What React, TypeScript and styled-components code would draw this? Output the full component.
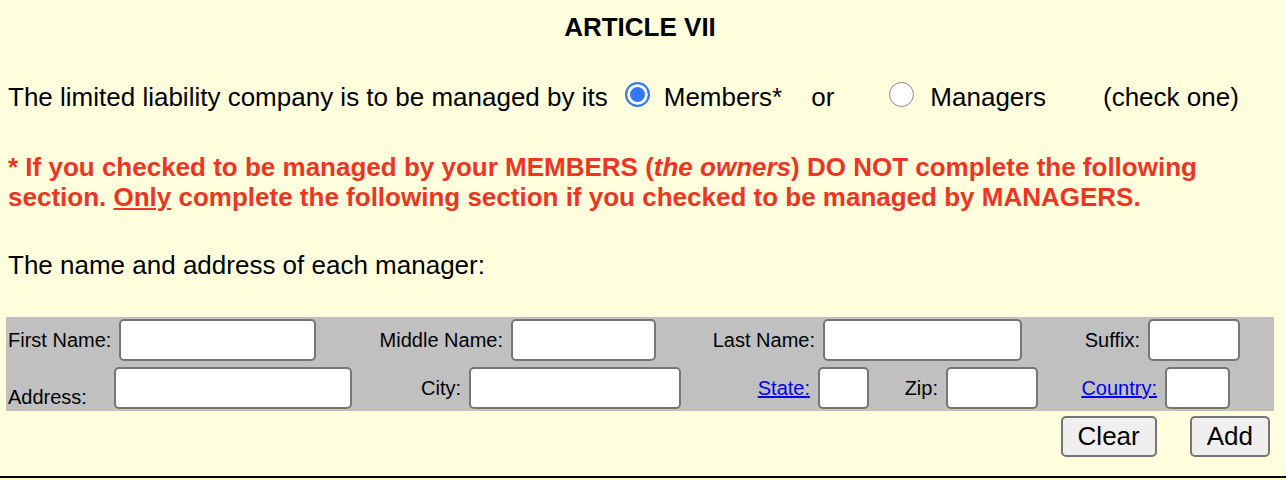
import styled, { createGlobalStyle } from 'styled-components';

const GlobalStyle = createGlobalStyle`
  html, body {
    margin: 0;
    padding: 0;
    background: #ffffdd;
  }
  body {
    font-family: "Liberation Sans", Arial, Helvetica, sans-serif;
    color: #000;
  }
`;

const Page = styled.div`
  width: 1286px;
  box-sizing: border-box;
  padding: 0 12px 19px 6px;
  border-bottom: 2px solid #000;
`;

const Title = styled.h1`
  margin: 12px 0 0;
  font-size: 26px;
  line-height: 30px;
  font-weight: bold;
  text-align: center;
`;

const ChoiceLine = styled.div`
  display: flex;
  align-items: center;
  margin-top: 40px;
  padding-left: 2px;
  font-size: 26px;
  line-height: 30px;
`;

const Spaced = styled.span<{ $ml: number }>`
  margin-left: ${(p) => p.$ml}px;
`;

const Radio = styled.input<{ $ml: number }>`
  appearance: none;
  box-sizing: border-box;
  width: 25px;
  height: 25px;
  margin: -6px 0 0 ${(p) => p.$ml}px;
  border-radius: 50%;
  border: 1.5px solid #8a8a8a;
  background: #fff;
  &:checked {
    border: 2.5px solid #3478f6;
    background: #3478f6;
    box-shadow: inset 0 0 0 3px #fff;
  }
`;

const Note = styled.p`
  margin: 40px 0 0;
  padding-left: 2px;
  color: #ee3524;
  font-size: 26px;
  line-height: 30px;
  font-weight: bold;
`;

const Plain = styled.p`
  margin: 38px 0 0;
  padding-left: 2px;
  font-size: 26px;
  line-height: 30px;
`;

const FormBox = styled.div`
  margin-top: 37px;
  padding: 2px;
  background: #c0c0c0;
  display: flex;
  flex-direction: column;
  gap: 6px;
`;

const Row = styled.div`
  display: flex;
`;

const Field = styled.div<{ $w: number; $spread?: boolean }>`
  width: ${(p) => p.$w}px;
  display: flex;
  align-items: center;
  justify-content: ${(p) => (p.$spread ? 'space-between' : 'flex-end')};
  gap: 8px;
`;

const Label = styled.span<{ $bottom?: boolean }>`
  font-size: 20px;
  line-height: 24px;
  white-space: nowrap;
  align-self: ${(p) => (p.$bottom ? 'flex-end' : 'center')};
`;

const LinkLabel = styled.a`
  font-size: 20px;
  line-height: 24px;
  color: #0000ee;
  text-decoration: underline;
  white-space: nowrap;
`;

const TextBox = styled.input<{ $w: number }>`
  width: ${(p) => p.$w}px;
  height: 42px;
  box-sizing: border-box;
  margin: 0;
  border: 2px solid #767676;
  border-radius: 5px;
  background: #fff;
`;

const Buttons = styled.div`
  display: flex;
  justify-content: flex-end;
  gap: 33px;
  margin-top: 5px;
  padding-right: 4px;
`;

const Button = styled.button`
  height: 41px;
  padding: 0 15px;
  font-family: "Liberation Sans", Arial, sans-serif;
  font-size: 26px;
  color: #000;
  background: #efefef;
  border: 2px solid #767676;
  border-radius: 5px;
`;

export default function App() {
  return (
    <>
      <GlobalStyle />
      <Page>
        <Title>ARTICLE VII</Title>

        <ChoiceLine>
          <span>The limited liability company is to be managed by its</span>
          <Radio type="radio" name="managed" defaultChecked $ml={17} />
          <Spaced $ml={14}>Members*</Spaced>
          <Spaced $ml={29}>or</Spaced>
          <Radio type="radio" name="managed" $ml={55} />
          <Spaced $ml={16}>Managers</Spaced>
          <Spaced $ml={57}>(check one)</Spaced>
        </ChoiceLine>

        <Note>
          * If you checked to be managed by your MEMBERS (<i>the owners</i>) DO NOT complete the following
          section. <u>Only</u> complete the following section if you checked to be managed by MANAGERS.
        </Note>

        <Plain>The name and address of each manager:</Plain>

        <FormBox>
          <Row>
            <Field $w={308} $spread>
              <Label>First Name:</Label>
              <TextBox $w={198} />
            </Field>
            <Field $w={340}>
              <Label>Middle Name:</Label>
              <TextBox $w={145} />
            </Field>
            <Field $w={366}>
              <Label>Last Name:</Label>
              <TextBox $w={199} />
            </Field>
            <Field $w={218}>
              <Label>Suffix:</Label>
              <TextBox $w={92} />
            </Field>
          </Row>
          <Row>
            <Field $w={344} $spread>
              <Label $bottom>Address:</Label>
              <TextBox $w={238} />
            </Field>
            <Field $w={329}>
              <Label>City:</Label>
              <TextBox $w={212} />
            </Field>
            <Field $w={188}>
              <LinkLabel href="#">State:</LinkLabel>
              <TextBox $w={51} />
            </Field>
            <Field $w={169}>
              <Label>Zip:</Label>
              <TextBox $w={92} />
            </Field>
            <Field $w={192}>
              <LinkLabel href="#">Country:</LinkLabel>
              <TextBox $w={65} />
            </Field>
          </Row>
        </FormBox>

        <Buttons>
          <Button type="button">Clear</Button>
          <Button type="button">Add</Button>
        </Buttons>
      </Page>
    </>
  );
}
